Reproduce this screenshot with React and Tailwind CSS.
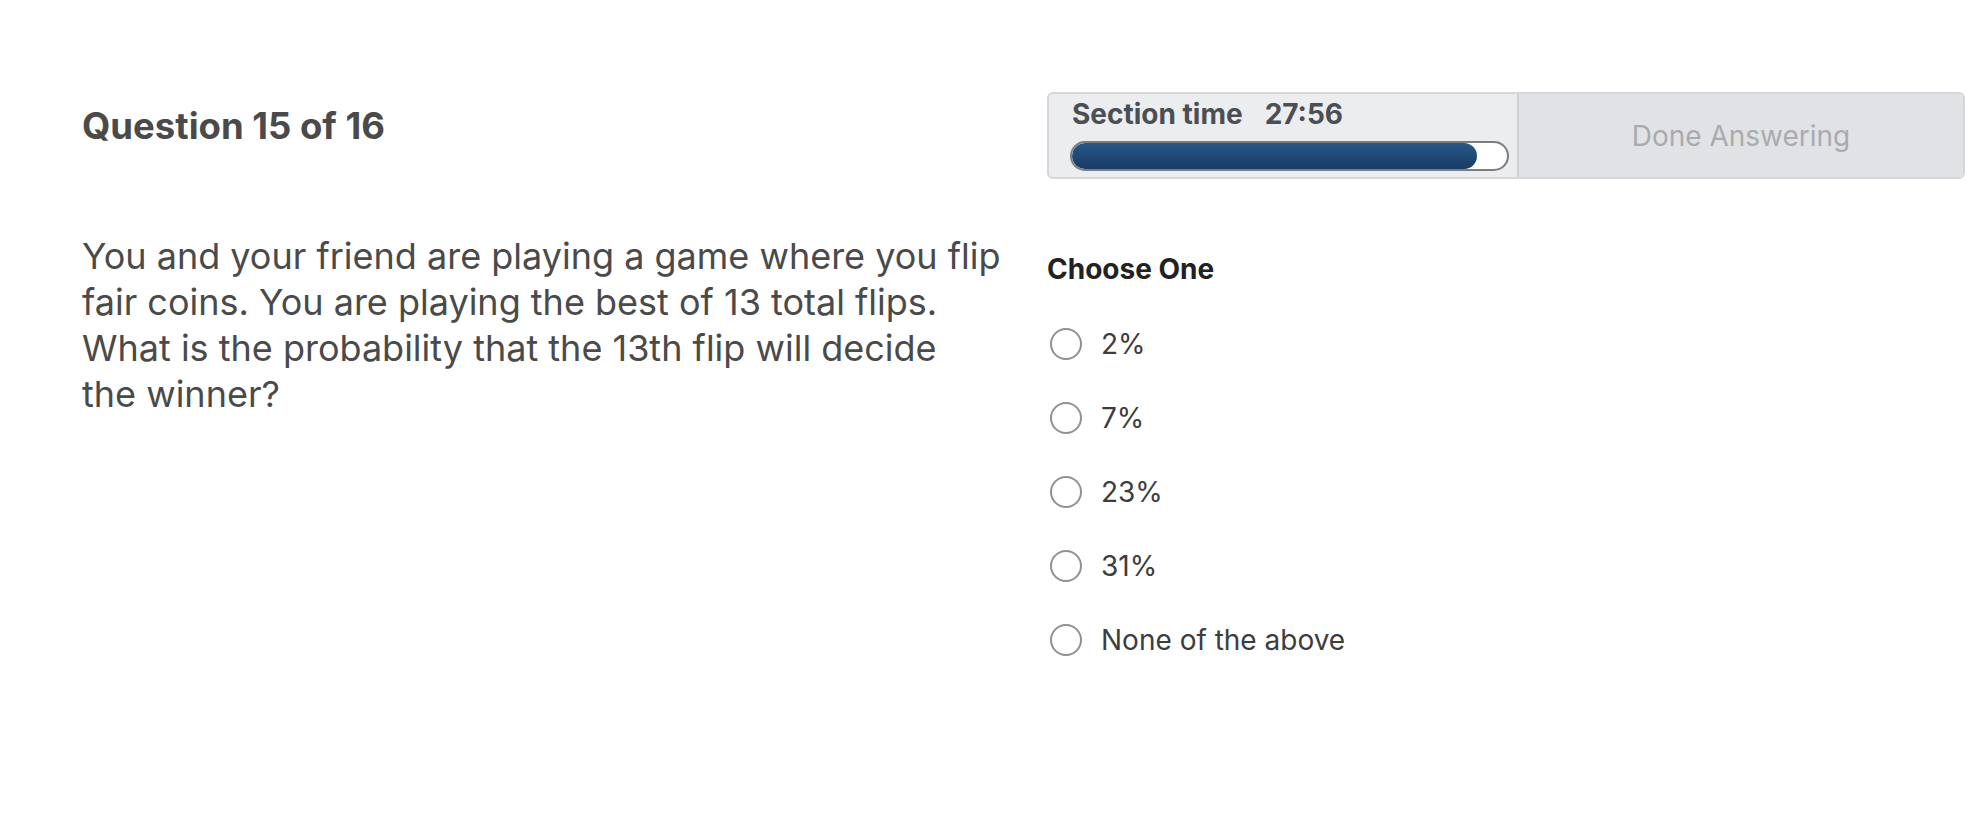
export default function App() {
  const font = { fontFamily: 'Inter, "Noto Sans", sans-serif' };
  const options = ["2%", "7%", "23%", "31%", "None of the above"];
  return (
    <div className="w-[1986px] h-[818px] bg-white flex" style={font}>
      <div className="w-[1047px] pl-[82px] pt-[104px] shrink-0">
        <h1 className="text-[36.5px] leading-[44px] font-bold text-[#4a4a4a]">
          Question 15 of 16
        </h1>
        <p className="mt-[85px] w-[950px] text-[36px] leading-[46px] text-[#4a4a4a]">
          You and your friend are playing a game where you flip
          <br />
          fair coins. You are playing the best of 13 total flips.
          <br />
          What is the probability that the 13th flip will decide
          <br />
          the winner?
        </p>
      </div>
      <div className="w-[918px] pt-[92px] shrink-0">
        <div className="flex h-[87px] border-2 border-[#d6d7da] rounded-[6px] bg-[#ecedef] overflow-hidden">
          <div className="w-[468px] shrink-0 flex flex-col pl-[21px] pr-[8px] pt-[3px] pb-[6px]">
            <div className="ml-[2px] text-[28px] leading-[34px] font-bold text-[#4b4f54] whitespace-nowrap">
              <span>Section time</span>
              <span className="ml-[22px]">27:56</span>
            </div>
            <div className="mt-auto h-[30px] rounded-full border-2 border-[#7a7d81] bg-white overflow-hidden">
              <div className="h-full w-[405px] rounded-full bg-linear-to-b from-[#25598d] to-[#1a3b60]" />
            </div>
          </div>
          <div className="flex-1 flex items-center justify-center bg-[#e1e2e5] border-l-2 border-[#cfd0d3] text-[28px] text-[#a9abae]">
            Done Answering
          </div>
        </div>
        <div className="mt-[74px] text-[28px] leading-[33px] font-bold text-[#222222]">Choose One</div>
        <div className="mt-[21px] flex flex-col">
          {options.map((o) => (
            <label key={o} className="flex items-center h-[74px]">
              <span className="ml-[3px] w-[32px] h-[32px] rounded-full border-2 border-[#8e9296] bg-white shrink-0" />
              <span className="ml-[19px] text-[28px] text-[#3d3d3d]">{o}</span>
            </label>
          ))}
        </div>
      </div>
    </div>
  );
}
